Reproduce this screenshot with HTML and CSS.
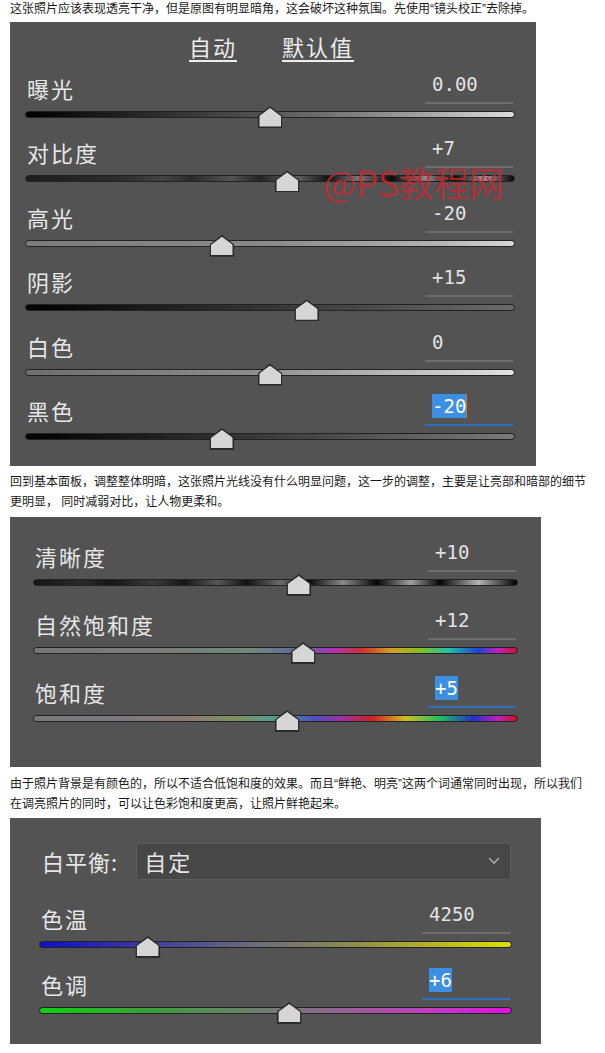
FILE: index.html
```html
<!DOCTYPE html>
<html lang="zh-CN">
<head>
    <meta charset="UTF-8">
    <meta name="viewport" content="width=device-width, initial-scale=1.0">
    <title>基本面板调整</title>
    <link rel="stylesheet" href="styles.css">
</head>
<body>
    <div class="page">
        <p class="caption">这张照片应该表现透亮干净，但是原图有明显暗角，这会破坏这种氛围。先使用“镜头校正”去除掉。</p>

        <div class="panel panel-tone">
            <div class="panel-top">
                <span class="link">自动</span>
                <span class="link">默认值</span>
            </div>
            <div class="rows">
                <div class="row">
                    <div class="row-head"><span class="label">曝光</span><span class="value">0.00</span></div>
                    <div class="slider"><div class="track track-exposure"></div><span class="thumb" style="left: 50%"></span></div>
                </div>
                <div class="row">
                    <div class="row-head"><span class="label">对比度</span><span class="value">+7</span></div>
                    <div class="slider"><div class="track track-contrast"></div><span class="thumb" style="left: 53.5%"></span></div>
                </div>
                <div class="row">
                    <div class="row-head"><span class="label">高光</span><span class="value">-20</span></div>
                    <div class="slider"><div class="track track-highlights"></div><span class="thumb" style="left: 40.2%"></span></div>
                </div>
                <div class="row">
                    <div class="row-head"><span class="label">阴影</span><span class="value">+15</span></div>
                    <div class="slider"><div class="track track-shadows"></div><span class="thumb" style="left: 57.5%"></span></div>
                </div>
                <div class="row">
                    <div class="row-head"><span class="label">白色</span><span class="value">0</span></div>
                    <div class="slider"><div class="track track-whites"></div><span class="thumb" style="left: 50%"></span></div>
                </div>
                <div class="row">
                    <div class="row-head"><span class="label">黑色</span><span class="value active"><span class="sel">-20</span><span class="caret"></span></span></div>
                    <div class="slider"><div class="track track-blacks"></div><span class="thumb" style="left: 40.2%"></span></div>
                </div>
            </div>
            <div class="watermark">@PS教程网</div>
        </div>

        <p class="caption caption-2">回到基本面板，调整整体明暗，这张照片光线没有什么明显问题，这一步的调整，主要是让亮部和暗部的细节更明显， 同时减弱对比，让人物更柔和。</p>

        <div class="panel panel-presence">
            <div class="rows">
                <div class="row">
                    <div class="row-head"><span class="label">清晰度</span><span class="value">+10</span></div>
                    <div class="slider"><div class="track track-clarity"></div><span class="thumb" style="left: 54.8%"></span></div>
                </div>
                <div class="row">
                    <div class="row-head"><span class="label">自然饱和度</span><span class="value">+12</span></div>
                    <div class="slider"><div class="track track-vibrance"></div><span class="thumb" style="left: 55.7%"></span></div>
                </div>
                <div class="row">
                    <div class="row-head"><span class="label">饱和度</span><span class="value active"><span class="sel">+5</span></span></div>
                    <div class="slider"><div class="track track-saturation"></div><span class="thumb" style="left: 52.4%"></span></div>
                </div>
            </div>
        </div>

        <p class="caption caption-3">由于照片背景是有颜色的，所以不适合低饱和度的效果。而且“鲜艳、明亮”这两个词通常同时出现，所以我们在调亮照片的同时，可以让色彩饱和度更高，让照片鲜艳起来。</p>

        <div class="panel panel-wb">
            <div class="wb-line">
                <span class="label">白平衡:</span>
                <div class="select">
                    <span>自定</span>
                    <svg class="chevron" width="12" height="8" viewBox="0 0 12 8"><polyline points="1,1 6,6 11,1" fill="none" stroke="#a8a8a8" stroke-width="1.6"/></svg>
                </div>
            </div>
            <div class="rows">
                <div class="row">
                    <div class="row-head"><span class="label">色温</span><span class="value">4250</span></div>
                    <div class="slider"><div class="track track-temp"></div><span class="thumb" style="left: 23%"></span></div>
                </div>
                <div class="row">
                    <div class="row-head"><span class="label">色调</span><span class="value active"><span class="sel">+6</span></span></div>
                    <div class="slider"><div class="track track-tint"></div><span class="thumb" style="left: 52.9%"></span></div>
                </div>
            </div>
        </div>
    </div>
</body>
</html>
```

FILE: styles.css
```css
body {
    margin: 0;
    background: #ffffff;
    font-family: "Noto Sans CJK SC", "DejaVu Sans", sans-serif;
}
.page {
    padding-left: 10px;
}
.caption {
    margin: 0;
    width: 580px;
    font-family: "Liberation Sans", "Noto Sans CJK SC", sans-serif;
    font-size: 12px;
    line-height: 20px;
    color: #1a1a1a;
}
.caption:first-child {
    line-height: 18px;
    margin-bottom: 4px;
}
.caption-2 {
    margin: 6px 0 5px;
}
.caption-3 {
    margin: 7px 0 4px;
}

/* panels */
.panel {
    position: relative;
    background: #535353;
    color: #e4e4e4;
    box-sizing: border-box;
}
.panel-tone {
    width: 526px;
    padding: 0 21px 12px 15px;
}
.panel-presence {
    width: 531px;
    padding: 21px 23px 31px 23px;
}
.panel-wb {
    width: 531px;
    padding: 25px 29px 16px 29px;
}
.panel-top {
    height: 48px;
    display: flex;
    justify-content: center;
    align-items: center;
    gap: 45px;
    padding-left: 3px;
    box-sizing: border-box;
}
.link {
    font-size: 22px;
    letter-spacing: 2px;
    line-height: 28px;
    text-decoration: underline;
    text-underline-offset: 4px;
    color: #ececec;
}
.rows {
    display: flex;
    flex-direction: column;
    gap: 2.4px;
}
.panel-presence .rows {
    gap: 6px;
}
.panel-wb .rows {
    gap: 4px;
    margin-top: 20px;
}
.row-head {
    display: flex;
    justify-content: space-between;
    align-items: flex-end;
    height: 34px;
    padding: 0 2px;
}
.label {
    font-size: 22px;
    letter-spacing: 2px;
    line-height: 28px;
    margin-bottom: 2px;
    color: #e6e6e6;
}
.value {
    width: 88px;
    height: 34px;
    box-sizing: border-box;
    padding: 0 0 4px 7px;
    display: flex;
    align-items: flex-end;
    border-bottom: 2px solid #6c6c6c;
    font-family: "DejaVu Sans Mono", monospace;
    font-size: 19px;
    line-height: 28px;
    color: #e2e2e2;
}
.value.active {
    border-bottom-color: #2f6fbf;
}
.sel {
    background: #3d8fe4;
    color: #ffffff;
    line-height: 24px;
    margin-bottom: 2px;
}
.caret {
    width: 1px;
    height: 24px;
    margin-bottom: 2px;
    background: #d2781e;
}

/* sliders */
.slider {
    position: relative;
    height: 28px;
}
.track {
    position: relative;
    top: 7px;
    height: 5px;
    border: 1.5px solid #222222;
    border-radius: 4px;
}
.thumb {
    position: absolute;
    top: 2px;
    width: 25px;
    height: 22px;
    transform: translateX(-50%);
    background: #2b2b2b;
    clip-path: polygon(50% 0, 100% 45%, 100% 100%, 0 100%, 0 45%);
}
.thumb::after {
    content: "";
    position: absolute;
    left: 1.5px;
    right: 1.5px;
    top: 2px;
    bottom: 1.5px;
    background: #d6d6d6;
    clip-path: polygon(50% 0, 100% 44%, 100% 100%, 0 100%, 0 44%);
}
.track-exposure {
    background: linear-gradient(to right, #000 0%, #2a2a2a 25%, #555 50%, #9a9a9a 78%, #dadada 100%);
}
.track-contrast {
    background: linear-gradient(to right, #1c1c1c 0%, #2e2e2e 20%, #444 28%, #2a2a2a 34%, #555 42%, #222 48%, #666 55%, #111 62%, #777 68%, #0c0c0c 75%, #8a8a8a 82%, #080808 88%, #9a9a9a 94%, #050505 100%);
}
.track-highlights {
    background: linear-gradient(to right, #7c7c7c 0%, #8a8a8a 50%, #b4b4b4 85%, #d6d6d6 100%);
}
.track-shadows {
    background: linear-gradient(to right, #000 0%, #262626 35%, #4a4a4a 70%, #6a6a6a 100%);
}
.track-whites {
    background: linear-gradient(to right, #6e6e6e 0%, #8c8c8c 45%, #c0c0c0 80%, #e2e2e2 100%);
}
.track-blacks {
    background: linear-gradient(to right, #000 0%, #2a2a2a 35%, #5a5a5a 75%, #7a7a7a 100%);
}
.track-clarity {
    background: linear-gradient(to right, #151515 0%, #2a2a2a 10%, #151515 16%, #3a3a3a 25%, #151515 31%, #575757 38%, #111 44%, #6a6a6a 51%, #0a0a0a 57%, #8a8a8a 64%, #050505 71%, #a0a0a0 78%, #050505 84%, #b4b4b4 92%, #000 100%);
}
.track-vibrance {
    background: linear-gradient(to right, #767676 0%, #7a7a7a 25%, #6f8a78 45%, #5a6aa0 55%, #b030b0 62%, #d03030 68%, #d0a020 74%, #80c020 80%, #20c0b0 86%, #2040d0 92%, #c020c0 96%, #d01030 100%);
}
.track-saturation {
    background: linear-gradient(to right, #7a7a7a 0%, #7c7a80 20%, #8c7a70 32%, #7a9060 42%, #50a090 50%, #4a50c0 58%, #a030a0 64%, #d02020 70%, #d0c020 77%, #20c060 84%, #2030d0 91%, #c020c0 96%, #d01020 100%);
}
.track-temp {
    background: linear-gradient(to right, #1010c8 0%, #3a3aa0 22%, #6a6a80 45%, #8a8a50 65%, #bcb820 85%, #dede00 100%);
}
.track-tint {
    background: linear-gradient(to right, #10d010 0%, #3aa03a 22%, #6a806a 45%, #8a6a8a 60%, #c040c0 82%, #e010e0 100%);
}

/* white balance */
.wb-line {
    display: flex;
    align-items: center;
    height: 37px;
    padding-left: 3px;
}
.wb-line .label {
    margin: 0 18px 0 0;
    letter-spacing: 1px;
}
.select {
    flex: 1;
    height: 37px;
    box-sizing: border-box;
    display: flex;
    align-items: center;
    justify-content: space-between;
    padding: 0 10px 0 7px;
    background: #474747;
    border: 1px solid #5c5c5c;
    border-radius: 3px;
    font-size: 22px;
    letter-spacing: 2px;
    color: #e6e6e6;
    margin-right: 1px;
}

.watermark {
    position: absolute;
    left: 313px;
    top: 140px;
    font-family: "Noto Sans CJK SC", sans-serif;
    font-size: 35px;
    line-height: 40px;
    color: rgba(200, 40, 50, 0.78);
}
```
